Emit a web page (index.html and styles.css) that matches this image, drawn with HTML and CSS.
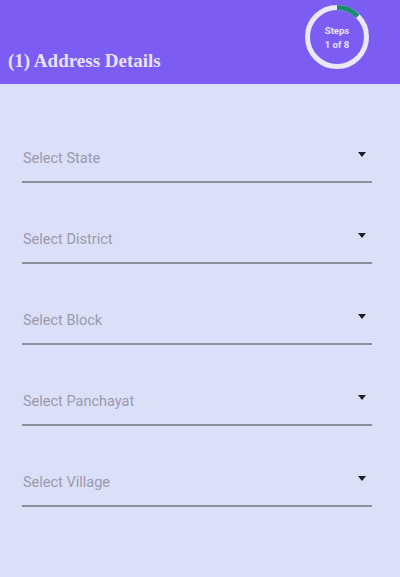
FILE: index.html
```html
<!DOCTYPE html>
<html>
<head>
<meta charset="utf-8">
<link rel="stylesheet" href="styles.css">
</head>
<body>
<header class="header">
  <h1 class="title">(1) Address Details</h1>
  <div class="steps">
    <svg class="ring" width="66" height="66" viewBox="0 0 66 66">
      <circle cx="33" cy="33" r="29.5" fill="none" stroke="#e9e9f7" stroke-width="5"/>
      <circle cx="33" cy="33" r="29.5" fill="none" stroke="#1b8a6f" stroke-width="5" stroke-dasharray="23.2 200" transform="rotate(-90 33 33)"/>
    </svg>
    <div class="steps-text"><span>Steps</span><span>1 of 8</span></div>
  </div>
</header>
<main class="form">
  <div class="field"><span class="label">Select State</span><span class="arrow"></span></div>
  <div class="field"><span class="label">Select District</span><span class="arrow"></span></div>
  <div class="field"><span class="label">Select Block</span><span class="arrow"></span></div>
  <div class="field"><span class="label">Select Panchayat</span><span class="arrow"></span></div>
  <div class="field"><span class="label">Select Village</span><span class="arrow"></span></div>
</main>
</body>
</html>
```
FILE: styles.css
```css
html, body {
  margin: 0;
  padding: 0;
}
body {
  width: 400px;
  height: 577px;
  overflow: hidden;
  background: #dcdff8;
  font-family: Roboto, "Liberation Sans", sans-serif;
}
.header {
  height: 84px;
  background: #7b5df4;
  display: flex;
  justify-content: space-between;
  align-items: flex-start;
  padding: 0 30px 0 8px;
  box-sizing: border-box;
}
.title {
  margin: 50px 0 0 0;
  font-family: "Liberation Serif", serif;
  font-weight: bold;
  font-size: 19px;
  line-height: 22px;
  color: #e6e3fa;
}
.steps {
  position: relative;
  width: 66px;
  height: 66px;
  margin-top: 4px;
}
.ring {
  display: block;
}
.steps-text {
  position: absolute;
  inset: 0;
  display: flex;
  flex-direction: column;
  align-items: center;
  justify-content: center;
  gap: 3px;
  font-size: 9.5px;
  font-weight: bold;
  line-height: 11px;
  color: #e4e2fa;
  padding-top: 1px;
}
.form {
  padding: 18px 28px 0 22px;
}
.field {
  display: flex;
  align-items: center;
  justify-content: space-between;
  height: 20px;
  padding-bottom: 13px;
  border-bottom: 2px solid #8d8d9c;
  margin-top: 46px;
  padding-left: 1px;
}
.label {
  font-size: 14.5px;
  color: #9a9aae;
}
.arrow {
  width: 0;
  height: 0;
  border-left: 4.5px solid transparent;
  border-right: 4.5px solid transparent;
  border-top: 5px solid #1c1c2a;
  margin-right: 6px;
  margin-top: -8px;
}
```
